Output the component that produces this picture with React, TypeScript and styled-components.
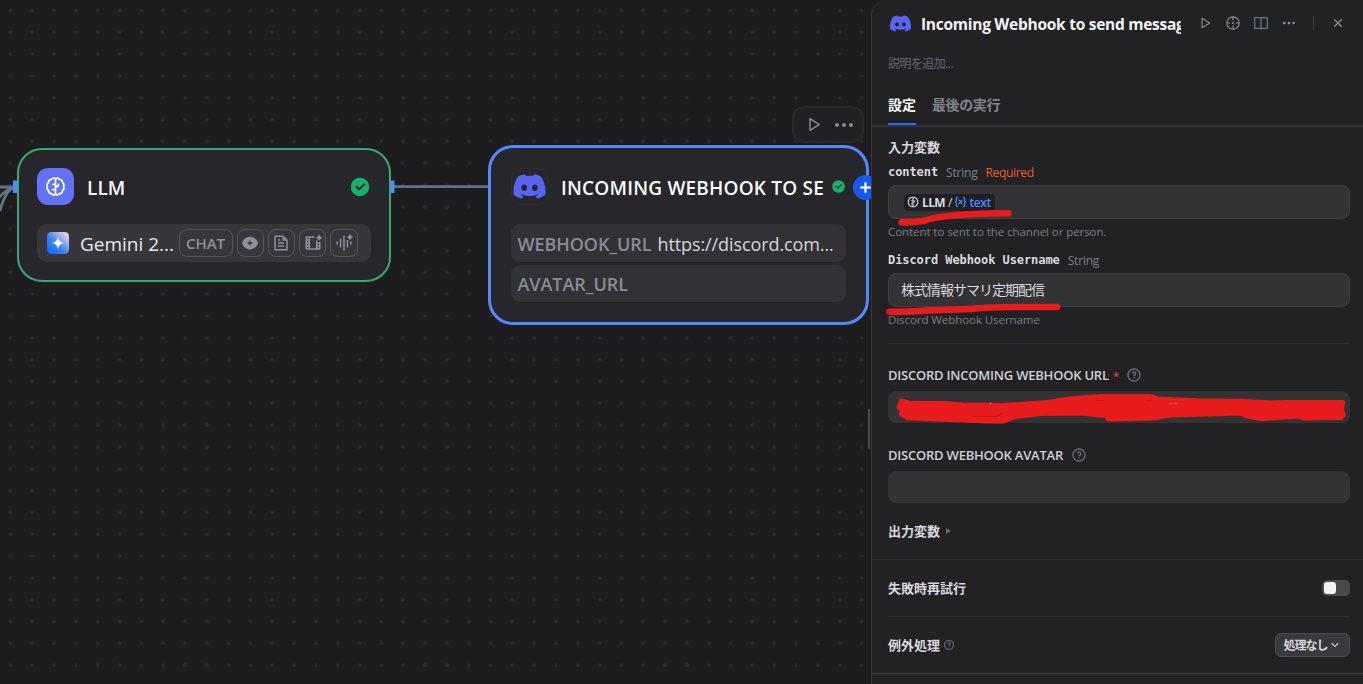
import React from 'react';
import styled, { createGlobalStyle } from 'styled-components';
import { FaDiscord } from 'react-icons/fa6';
import {
  RiPlayLargeLine,
  RiMoreFill,
  RiCloseLine,
  RiQuestionLine,
  RiCheckboxCircleFill,
  RiFileTextLine,
  RiFilmAiLine,
  RiVoiceAiFill,
  RiArrowDownSLine,
  RiAddLine,
} from 'react-icons/ri';

const UI_FONT = `'Open Sans', 'Noto Sans CJK JP', sans-serif`;

const GlobalStyle = createGlobalStyle`
  * { box-sizing: border-box; }
  body {
    margin: 0;
    background: #1d1d20;
    font-family: ${UI_FONT};
    overflow: hidden;
  }
`;

const Shell = styled.div`
  display: flex;
  width: 1363px;
  height: 684px;
  overflow: hidden;
`;

/* ---------- canvas ---------- */

const Canvas = styled.main`
  position: relative;
  flex: 1;
  overflow: hidden;
  background-color: #1d1d20;
  background-image: radial-gradient(circle, #2a2a2f 1.4px, transparent 2.1px);
  background-size: 21.84px 21.84px;
  background-position: -0.6px -0.5px;
`;

const Edges = styled.svg`
  position: absolute;
  left: 0;
  top: 0;
`;

const Node = styled.section<{ $x: number; $y: number; $w: number; $h: number; $selected?: boolean }>`
  position: absolute;
  left: ${p => p.$x}px;
  top: ${p => p.$y}px;
  width: ${p => p.$w}px;
  height: ${p => p.$h}px;
  padding: ${p => (p.$selected ? '20px 20px' : '18px 18.5px')};
  border: ${p => (p.$selected ? '3px solid #5289ff' : '2px solid #3ba873')};
  border-radius: 25px;
  background: #27272b;
`;

const NodeHeader = styled.header`
  display: flex;
  align-items: center;
  height: 37px;
  margin-bottom: 19px;
`;

const LlmBadge = styled.div`
  display: flex;
  align-items: center;
  justify-content: center;
  width: 37px;
  height: 37px;
  border-radius: 11px;
  background: #6172f3;
  color: #fff;
`;

const ToolBadge = styled(LlmBadge)`
  background: #27272b;
  border: 1px solid #2c2c30;
  color: #5865f2;
`;

const NodeTitle = styled.h2<{ $spacing: number }>`
  flex: 1;
  min-width: 0;
  margin: 2px 0 0 13px;
  overflow: hidden;
  white-space: nowrap;
  color: #fbfbfc;
  font-size: 19px;
  line-height: 28px;
  font-weight: 600;
  letter-spacing: ${p => p.$spacing}px;
`;

const StatusIcon = styled(RiCheckboxCircleFill)`
  flex: none;
  margin-left: 6px;
  color: #17b26a;
`;

const ModelRow = styled.div`
  display: flex;
  align-items: center;
  gap: 4px;
  height: 38px;
  padding: 0 12px 0 9.5px;
  border-radius: 10px;
  background: #37373b;
`;

const ModelName = styled.span`
  width: 94.5px;
  margin: 2px 0 0 7.5px;
  color: #e9e9ec;
  font-size: 19px;
  line-height: 28px;
  white-space: nowrap;
`;

const FeatureTag = styled.span<{ $wide?: boolean }>`
  display: flex;
  align-items: center;
  justify-content: center;
  flex: none;
  width: ${p => (p.$wide ? 54 : 27.3)}px;
  height: 28px;
  border: 1.4px solid #55555b;
  border-radius: 8px;
  color: #8f909a;
  font-size: 15px;
  font-weight: 600;
`;

const ParamRow = styled.div`
  display: flex;
  align-items: center;
  gap: 6px;
  height: 37.5px;
  margin-bottom: 3px;
  padding: 1px 6.5px 0;
  border-radius: 9px;
  background: #323236;
  font-size: 18px;
  white-space: nowrap;
`;

const ParamKey = styled.span`
  color: #8a8b94;
  font-weight: 600;
  letter-spacing: -0.05px;
`;

const ParamValue = styled.span`
  color: #d5d5da;
  letter-spacing: -0.1px;
`;

const NodeToolbar = styled.div`
  position: absolute;
  left: 792px;
  top: 106px;
  display: flex;
  align-items: center;
  gap: 10px;
  width: 72px;
  height: 37px;
  padding-left: 11px;
  border: 2px solid #29292c;
  border-radius: 12px;
  background: #212124;
  color: #8b8c95;
`;

const AddHandle = styled.div`
  position: absolute;
  left: 853px;
  top: 174.5px;
  display: flex;
  align-items: center;
  justify-content: center;
  width: 25px;
  height: 25px;
  border-radius: 50%;
  background: #155aef;
  color: #fff;
`;

const ResizeGrip = styled.div`
  position: absolute;
  left: 868px;
  top: 409px;
  width: 2px;
  height: 40px;
  border-radius: 1px;
  background: #4b4b50;
`;

/* ---------- panel ---------- */

const Panel = styled.aside`
  position: relative;
  flex: none;
  width: 492px;
  height: 684px;
  border-left: 1px solid #39393d;
  border-top-left-radius: 16px;
  background: #222225;
`;

const PanelHeader = styled.header`
  display: flex;
  align-items: center;
  height: 46px;
  padding: 0 16px;
`;

const PanelLogo = styled.div`
  display: flex;
  align-items: center;
  justify-content: center;
  width: 24px;
  height: 24px;
  color: #5865f2;
`;

const PanelTitle = styled.h1`
  width: 260px;
  margin: 1px 0 0 9px;
  overflow: hidden;
  white-space: nowrap;
  color: #f4f4f6;
  font-size: 15.5px;
  line-height: 24px;
  font-weight: 700;
  letter-spacing: -0.27px;
`;

const HeaderActions = styled.div`
  display: flex;
  align-items: center;
  gap: 12px;
  margin-left: 17px;
  color: #8b8c95;
`;

const PlayAction = styled(RiPlayLargeLine)`
  margin-right: 1px;
`;

const ActionRule = styled.span`
  width: 1px;
  height: 14px;
  margin: 0 4px;
  background: #3c3c40;
`;

const Description = styled.p`
  height: 33px;
  margin: 0;
  padding: 0 16px;
  color: #66676e;
  font-size: 12px;
  line-height: 35px;
  letter-spacing: -0.55px;
`;

const Tabs = styled.nav`
  display: flex;
  gap: 16px;
  height: 48px;
  padding: 5px 16px 0;
  border-bottom: 2px solid #323236;
`;

const Tab = styled.a<{ $active?: boolean }>`
  display: flex;
  align-items: center;
  height: 41px;
  border-bottom: 2px solid ${p => (p.$active ? '#296dff' : 'transparent')};
  color: ${p => (p.$active ? '#fbfbfc' : '#81828b')};
  font-size: 14px;
  font-weight: 700;
  letter-spacing: ${p => (p.$active ? 0 : -0.4)}px;
`;

const Line = styled.div<{ $h: number; $mt?: number }>`
  display: flex;
  align-items: center;
  height: ${p => p.$h}px;
  margin-top: ${p => p.$mt ?? 0}px;
  padding: 0 13px 0 16px;
`;

const Heading = styled.h3`
  margin: 0;
  color: #d9d9dd;
  font-size: 13px;
  line-height: 20px;
  font-weight: 700;
`;

const CodeLabel = styled.span`
  margin-right: 8px;
  color: #d9d9dd;
  font-family: 'DejaVu Sans Mono', monospace;
  font-size: 12px;
  font-weight: 700;
  letter-spacing: -0.07px;
`;

const TypeLabel = styled.span`
  margin-right: 8px;
  padding-top: 1px;
  color: #7f8089;
  font-size: 12px;
  letter-spacing: -0.2px;
`;

const RequiredLabel = styled.span`
  color: #e5612a;
  font-size: 12px;
  letter-spacing: -0.35px;
`;

const Field = styled.div<{ $h: number; $mt?: number; $outlined?: boolean }>`
  display: flex;
  align-items: center;
  height: ${p => p.$h}px;
  margin: ${p => p.$mt ?? 0}px 13px 0 16px;
  padding: 0 12px;
  border: 1px solid ${p => (p.$outlined ? '#424246' : '#333336')};
  border-radius: 8px;
  background: #333336;
  color: #d9d9dd;
  font-size: 14px;
`;

const FieldValue = styled.span`
  padding-bottom: 3px;
  letter-spacing: -1px;
`;

const VariableChip = styled.span`
  display: flex;
  align-items: center;
  height: 17px;
  margin-left: 3px;
  padding: 0 4px 0 3px;
  border-radius: 4px;
  background: #1f1f24;
  color: #d9d9dd;
  font-size: 12px;
  font-weight: 600;
  white-space: nowrap;
`;

const ChipSource = styled.span`
  margin-left: 3px;
  font-weight: 700;
  letter-spacing: -0.6px;
`;

const ChipSlash = styled.span`
  margin: 0 2px 0 3px;
  font-weight: 400;
`;

const ChipName = styled.span`
  margin-left: 2px;
  color: #5289ff;
  letter-spacing: -0.4px;
`;

const Hint = styled.p`
  height: 26px;
  margin: 0;
  padding: 0 16px;
  color: #7b7c84;
  font-size: 11.5px;
  line-height: 26px;
  letter-spacing: -0.07px;
`;

const FormLabel = styled.label`
  display: flex;
  align-items: center;
  color: #d0d0d5;
  font-size: 13px;
  font-weight: 600;
  white-space: nowrap;
`;

const FormText = styled.span<{ $w: number }>`
  width: ${p => p.$w}px;
  letter-spacing: -0.22px;
`;

const Star = styled.span`
  margin: 0 7px 0 4px;
  color: #e0403a;
  font-size: 11px;
`;

const HelpIcon = styled(RiQuestionLine)<{ $ml: number }>`
  margin-left: ${p => p.$ml}px;
  color: #6b6c74;
`;

const Divider = styled.hr<{ $inset?: boolean; $strong?: boolean }>`
  height: 1px;
  margin: 0 ${p => (p.$inset ? '13px 0 16px' : '0')};
  border: 0;
  background: ${p => (p.$strong ? '#3c3c40' : '#2f2f33')};
`;

const Caret = styled.span`
  margin-left: 6px;
  border: solid transparent;
  border-width: 3.5px 0 3.5px 5px;
  border-left-color: #68696f;
`;

const Toggle = styled.span`
  display: flex;
  align-items: center;
  width: 28px;
  height: 16px;
  margin-left: auto;
  padding: 2px;
  border-radius: 5px;
  background: #4a4a4d;

  &::before {
    content: '';
    width: 12px;
    height: 12px;
    border-radius: 3px;
    background: #f4f4f5;
  }
`;

const SelectButton = styled.button`
  display: flex;
  align-items: center;
  justify-content: center;
  width: 75px;
  height: 24px;
  margin-left: auto;
  padding: 0;
  border: 1px solid #4c4c50;
  border-radius: 6px;
  background: #3a3a3e;
  color: #d9d9dd;
  font-family: ${UI_FONT};
  font-size: 12px;
  font-weight: 700;
  letter-spacing: -1px;
`;

const Marker = styled.svg`
  position: absolute;
  left: 0;
  top: 0;
  pointer-events: none;
`;

/* ---------- icons ---------- */

const BrainIcon = ({ size, weight = 2 }: { size: number; weight?: number }) => (
  <svg width={size} height={size} viewBox="0 0 24 24" fill="none" stroke="currentColor" strokeWidth={weight} strokeLinejoin="round" strokeLinecap="round">
    <path d="M12 3C10.500 1.900 8.600 2.300 7.600 3.800 5.500 3.800 4 5.300 4 7.400 2.400 8.500 2 10.300 2.800 12 2 13.700 2.400 15.500 4 16.600 4 18.700 5.500 20.200 7.600 20.200 8.600 21.700 10.500 22.100 12 21 13.500 22.100 15.400 21.700 16.400 20.200 18.500 20.200 20 18.700 20 16.600 21.600 15.500 22 13.700 21.200 12 22 10.300 21.600 8.500 20 7.400 20 5.300 18.500 3.800 16.400 3.800 15.400 2.300 13.500 1.900 12 3Z" />
    <path d="M12 3.500V20.500M12 9.500H9M12 15.500H8.500M12 12.500C14 12.500 15.500 11.500 15.500 9.500" />
  </svg>
);

const GeminiIcon = () => (
  <svg width="22" height="22" viewBox="0 0 22 22">
    <defs>
      <linearGradient id="gem" x1="0.1" y1="0.9" x2="0.95" y2="0.05">
        <stop offset="0" stopColor="#146bff" />
        <stop offset="0.4" stopColor="#3b82fb" />
        <stop offset="0.75" stopColor="#a9b9ea" />
        <stop offset="1" stopColor="#f7dccb" />
      </linearGradient>
    </defs>
    <rect width="22" height="22" rx="4.500" fill="url(#gem)" />
    <path d="M11 4.800C11.700 8.700 13.300 10.300 17.200 11 13.300 11.700 11.700 13.300 11 17.200 10.300 13.300 8.700 11.700 4.800 11 8.700 10.300 10.300 8.700 11 4.800Z" fill="#fff" />
  </svg>
);

const VisionIcon = () => (
  <svg width="18" height="18" viewBox="0 0 24 24">
    <path fillRule="evenodd" fill="currentColor" d="M12 3.500C17.500 3.500 21.500 7.800 22.700 12 21.500 16.200 17.500 20.500 12 20.500S2.500 16.200 1.300 12C2.500 7.800 6.500 3.500 12 3.500ZM12 7.700C11.300 10.400 10.400 11.300 7.700 12 10.400 12.700 11.300 13.600 12 16.300 12.700 13.600 13.600 12.700 16.300 12 13.600 11.300 12.700 10.400 12 7.700Z" />
  </svg>
);

const LocateIcon = () => (
  <svg width="16" height="16" viewBox="0 0 16 16" fill="none" stroke="currentColor" strokeWidth="1.200">
    <circle cx="8" cy="8" r="6.200" />
    <path d="M8 1.800V5.200M8 10.800V14.200M1.800 8H5.200M10.800 8H14.200" />
    <circle cx="8" cy="8" r="1.100" fill="currentColor" stroke="none" />
  </svg>
);

const BookIcon = () => (
  <svg width="16" height="16" viewBox="0 0 16 16" fill="none" stroke="#667085" strokeWidth="1.300">
    <path d="M8 2.600H1.700V13.400H8M8 2.600H14.300V13.400H8M8 2.300V14.800" />
  </svg>
);

const VariableIcon = () => (
  <svg width="13" height="12" viewBox="0 0 14 13" fill="none" stroke="#5289ff" strokeWidth="1.300" strokeLinecap="round">
    <path d="M3.800 1.500C2.500 1.500 2.400 2.200 2.400 3.200V4.800C2.400 5.800 1.800 6.500 1 6.500 1.800 6.500 2.400 7.200 2.400 8.200V9.800C2.400 10.800 2.500 11.500 3.800 11.500M10.200 1.500C11.500 1.500 11.600 2.200 11.600 3.200V4.800C11.600 5.800 12.200 6.500 13 6.500 12.200 6.500 11.600 7.200 11.600 8.200V9.800C11.600 10.800 11.500 11.500 10.200 11.500" />
    <path d="M5.300 4.500C7 4.500 7 8.500 8.700 8.500M8.900 4.500 5.100 8.500" />
  </svg>
);

export default function App() {
  return (
    <>
      <GlobalStyle />
      <Shell>
        <Canvas>
          <Edges width="871" height="684" fill="none" stroke="#667085" strokeWidth="2.800">
            <path d="M0 187H14M0 211C3 199 8 189 15 187M-2 198C3 194 8 188 15 187M394 186.700H489" />
            <path d="M15 180.500V193" stroke="#5289ff" strokeWidth="4" />
            <path d="M392.500 180.500V193" stroke="#5289ff" strokeWidth="4" />
          </Edges>

          <Node $x={16.5} $y={148} $w={374.500} $h={134}>
            <NodeHeader>
              <LlmBadge><BrainIcon size={21} /></LlmBadge>
              <NodeTitle $spacing={0.1}>LLM</NodeTitle>
              <StatusIcon size={22} />
            </NodeHeader>
            <ModelRow>
              <GeminiIcon />
              <ModelName>Gemini 2...</ModelName>
              <FeatureTag $wide>CHAT</FeatureTag>
              <FeatureTag><VisionIcon /></FeatureTag>
              <FeatureTag><RiFileTextLine size={18} /></FeatureTag>
              <FeatureTag><RiFilmAiLine size={18} /></FeatureTag>
              <FeatureTag><RiVoiceAiFill size={18} /></FeatureTag>
            </ModelRow>
          </Node>

          <NodeToolbar>
            <RiPlayLargeLine size={17} />
            <RiMoreFill size={24} />
          </NodeToolbar>

          <Node $x={488} $y={145.4} $w={380.5} $h={180} $selected>
            <NodeHeader>
              <ToolBadge><FaDiscord size={35} /></ToolBadge>
              <NodeTitle $spacing={0.2}>INCOMING WEBHOOK TO SEND</NodeTitle>
              <StatusIcon size={15} />
            </NodeHeader>
            <ParamRow>
              <ParamKey>WEBHOOK_URL</ParamKey>
              <ParamValue>https://discord.com...</ParamValue>
            </ParamRow>
            <ParamRow>
              <ParamKey>AVATAR_URL</ParamKey>
            </ParamRow>
          </Node>
          <AddHandle><RiAddLine size={17} strokeWidth={1} /></AddHandle>
          <ResizeGrip />
        </Canvas>

        <Panel>
          <PanelHeader>
            <PanelLogo><FaDiscord size={23} /></PanelLogo>
            <PanelTitle>Incoming Webhook to send message</PanelTitle>
            <HeaderActions>
              <PlayAction size={14} />
              <LocateIcon />
              <BookIcon />
              <RiMoreFill size={16} />
              <ActionRule />
              <RiCloseLine size={16} />
            </HeaderActions>
          </PanelHeader>
          <Description>説明を追加...</Description>
          <Tabs>
            <Tab $active>設定</Tab>
            <Tab>最後の実行</Tab>
          </Tabs>

          <Line $h={24} $mt={8}><Heading>入力変数</Heading></Line>
          <Line $h={26}>
            <CodeLabel>content</CodeLabel>
            <TypeLabel>String</TypeLabel>
            <RequiredLabel>Required</RequiredLabel>
          </Line>
          <Field $h={34} $outlined>
            <VariableChip>
              <BrainIcon size={12} weight={2.200} />
              <ChipSource>LLM</ChipSource>
              <ChipSlash>/</ChipSlash>
              <VariableIcon />
              <ChipName>text</ChipName>
            </VariableChip>
          </Field>
          <Hint>Content to sent to the channel or person.</Hint>
          <Line $h={27} $mt={1}>
            <CodeLabel>Discord Webhook Username</CodeLabel>
            <TypeLabel>String</TypeLabel>
          </Line>
          <Field $h={34} $outlined><FieldValue>株式情報サマリ定期配信</FieldValue></Field>
          <Hint>Discord Webhook Username</Hint>
          <Line $h={10} />
          <Divider $inset />

          <Line $h={32} $mt={15}>
            <FormLabel>
              <FormText $w={221}>DISCORD INCOMING WEBHOOK URL</FormText>
              <Star>*</Star>
              <HelpIcon size={16} $ml={0} />
            </FormLabel>
          </Line>
          <Field $h={32} />
          <Line $h={32} $mt={16}>
            <FormLabel>
              <FormText $w={175}>DISCORD WEBHOOK AVATAR</FormText>
              <HelpIcon size={16} $ml={8} />
            </FormLabel>
          </Line>
          <Field $h={32} />

          <Line $h={56}><Heading>出力変数</Heading><Caret /></Line>
          <Divider />
          <Line $h={56}><Heading>失敗時再試行</Heading><Toggle /></Line>
          <Divider $inset />
          <Line $h={56}>
            <Heading>例外処理</Heading>
            <HelpIcon size={12} $ml={3} />
            <SelectButton>処理なし<RiArrowDownSLine size={14} /></SelectButton>
          </Line>
          <Divider $strong />

          <Marker width="492" height="684" viewBox="872 0 492 684" fill="none" stroke="#e81c1c" strokeLinecap="round" strokeLinejoin="round">
            <path strokeWidth="6.600" d="M901.700 222.300C912 222.500 920 222 927 220 940 215.500 958 215 970 214.300 985 213.500 997 213.300 1008.500 213.300" />
            <path strokeWidth="6.600" d="M889.700 311.700C905 312 918 311.500 930 310.300 950 309.500 967 309.500 987 307.700 1010 306.700 1035 307 1057 307" />
            <path
              fill="#e81c1c"
              strokeWidth="4"
              d="M901 400.300 909 402.700 945 403 962 404.500 1003 405 1048 402 1070 398.500 1100 396 1150 396 1158 398.500 1200 400.500 1244 401 1270 402.500 1285 402 1343 402 1342 410 1344 415 1341 418 1304 418.500 1298 416.500 1262 419 1247 416.500 1240 413.500 1170 415.500 1154 418.500 1108 419.500 1106 416 1080 413.500 1040 414 1015 417 1004 421.500 985 421.500 953 420 908 418.500 901 414 902 410 898.500 407.500Z"
            />
            <path strokeWidth="0.700" stroke="#9c2426" d="M972 416.500H996L1002 413.700M1097 400.500H1104M1146 400.500H1151" />
            <path strokeWidth="0.800" stroke="#d99a9a" d="M990 403.500H991M1170 403.500H1172M1175 403.500H1176" />
          </Marker>
        </Panel>
      </Shell>
    </>
  );
}
